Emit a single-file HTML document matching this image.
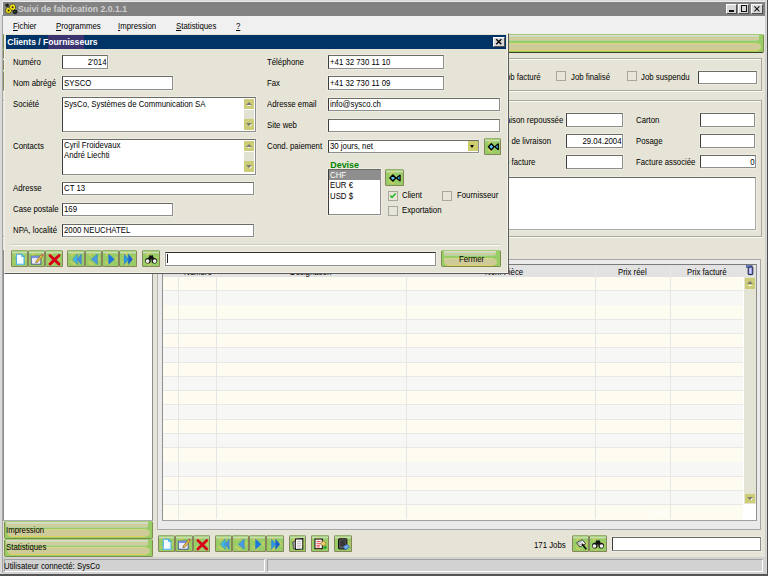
<!DOCTYPE html>
<html><head><meta charset="utf-8">
<style>
*{box-sizing:border-box}
html,body{margin:0;padding:0}
body{width:768px;height:576px;position:relative;overflow:hidden;background:#e6e4d6;font-family:"Liberation Sans",sans-serif;font-size:7.8px;color:#000}
.a{position:absolute}
.t{position:absolute;white-space:nowrap;line-height:8.95px;font-size:9.3px;transform:scaleX(.84);transform-origin:0 0}
.r{transform-origin:100% 0}
.c{transform-origin:50% 0}
.inp{position:absolute;background:#fff;border-top:1px solid #6c6c64;border-left:1px solid #3c3c3c;border-right:1px solid #8e8e8e;border-bottom:1px solid #8e8e8e;box-shadow:0 0 0 .6px #f2f2ea}
.inp2{position:absolute;background:#fff;border:1px solid #5a5a5a;border-right-color:#bdbbb0;border-bottom-color:#bdbbb0}
.chk{position:absolute;width:10px;height:10px;border:1px solid #a8a79c;background:#e8e6d8}
.pill{position:absolute;background:#98cc66;border:1px solid #7e8c4c;border-top-color:#a0cc78;border-radius:2px;overflow:hidden}
.pill:before{content:"";position:absolute;left:1.5px;right:4px;top:0;height:36%;background:linear-gradient(#e2dcc6 0,#e2dcc6 1.3px,#c4dcc0 1.3px,#c4dcc0 2.4px,#d0cc9c 2.4px,#d0cc9c 80%,#b0d4a0 80%);border-radius:0 0 5px 0/0 0 2px 0}
.pill:after{content:"";position:absolute;left:2px;right:2.5px;top:46%;height:38%;background:#cfcb98;border-top:1px solid #d8d488;border-bottom:1px solid #e0d062;border-radius:0 6px 6px 5px/0 50% 50% 70%}
.pill span{position:relative;z-index:1}
.gbtn{position:absolute;background:#9ccc6a;border:1px solid #7aa84e;border-radius:2px}
.sarr{position:absolute;width:10.5px;height:10.5px;background:#cdcd78}
.sarr:before,.sarr:after{content:"";position:absolute;left:50%;top:50%;width:0;height:0;border-left:3.2px solid transparent;border-right:3.2px solid transparent}
.up:after{margin:-2.2px 0 0 -3.2px;border-bottom:3.4px solid #7c7c74}
.up:before{margin:1.2px 0 0 -3.2px;border-top:1px solid #fff;border-left-width:3.2px}
.dn:after{margin:-1.6px 0 0 -3.2px;border-top:3.4px solid #7c7c74}
.dn:before{margin:-0.6px 0 0 -1px;border-top:3px solid #fff;border-left-width:3.4px;border-right:none;transform:skewX(-30deg)}
</style></head><body>

<!-- main window frame -->
<div class="a" style="left:0;top:0;width:768px;height:576px;background:#dadada"></div>
<div class="a" style="left:1.8px;top:1px;width:763.5px;height:572.5px;background:#ececec"></div>
<div class="a" style="left:2.2px;top:15px;width:0.9px;height:558px;background:#a4a4a4"></div>
<div class="a" style="left:765.3px;top:1px;width:1.2px;height:572.5px;background:#cdcdcd"></div>
<div class="a" style="left:766.5px;top:0;width:1.5px;height:576px;background:#4c4c4c"></div>
<div class="a" style="left:0;top:573.5px;width:768px;height:2.5px;background:#555"></div>
<!-- title bar -->
<div class="a" style="left:3px;top:2px;width:762px;height:13.5px;background:#828282"></div>
<svg class="a" style="left:4px;top:3px" width="14" height="12" viewBox="0 0 14 12">
<circle cx="11" cy="8.8" r="2.4" fill="#1a1a1a"/><circle cx="11" cy="8.8" r="0.8" fill="#2a6a2a"/>
<circle cx="3.2" cy="2.2" r="1.8" fill="#222"/>
<circle cx="4.6" cy="7.4" r="3" fill="#e8e010" stroke="#2a2a00" stroke-width="0.9" stroke-dasharray="1.2 0.7"/><circle cx="4.6" cy="7.4" r="1" fill="#402000"/>
<circle cx="8.6" cy="4.2" r="3" fill="#f0e818" stroke="#2a2a00" stroke-width="0.9" stroke-dasharray="1.2 0.7"/><circle cx="8.6" cy="4.2" r="1" fill="#401030"/>
</svg>
<div class="t" style="left:17.9px;top:4.3px;font-weight:bold;font-size:8.7px;color:#d0d0d0;line-height:11px;transform:none">Suivi de fabrication 2.0.1.1</div>
<!-- title buttons -->
<div class="a" style="left:726px;top:4px;width:11px;height:9.5px;background:#d8d8d8;border:1px solid;border-color:#fff #505050 #505050 #fff"></div>
<div class="a" style="left:729.2px;top:10.2px;width:4.6px;height:1.4px;background:#111"></div>
<div class="a" style="left:738px;top:4px;width:11px;height:9.5px;background:#d8d8d8;border:1px solid;border-color:#fff #505050 #505050 #fff"></div>
<div class="a" style="left:740.8px;top:5.4px;width:6.6px;height:6.3px;border:0.9px solid #111;border-top-width:1.8px"></div>
<div class="a" style="left:751px;top:4px;width:11.5px;height:9.5px;background:#d8d8d8;border:1px solid;border-color:#fff #505050 #505050 #fff"></div>
<svg class="a" style="left:751px;top:4px" width="12" height="10"><path d="M3.4 2.4 L8.4 7.4 M8.4 2.4 L3.4 7.4" stroke="#111" stroke-width="1.1"/></svg>
<!-- menu bar -->
<div class="a" style="left:3px;top:15.5px;width:762px;height:18.5px;background:#f0f0f0"></div>
<div class="t" style="left:12.7px;top:21.6px;"><u style="text-decoration:underline;text-decoration-thickness:1px;text-underline-offset:0.5px">F</u>ichier</div>
<div class="t" style="left:55.7px;top:21.6px;"><u style="text-decoration:underline;text-decoration-thickness:1px;text-underline-offset:0.5px">P</u>rogrammes</div>
<div class="t" style="left:118px;top:21.6px;"><u style="text-decoration:underline;text-decoration-thickness:1px;text-underline-offset:0.5px">I</u>mpression</div>
<div class="t" style="left:176px;top:21.6px;"><u style="text-decoration:underline;text-decoration-thickness:1px;text-underline-offset:0.5px">S</u>tatistiques</div>
<div class="t" style="left:236px;top:21.6px;"><u style="text-decoration:underline;text-decoration-thickness:1px;text-underline-offset:0.5px">?</u></div>

<!-- main content bg -->
<div class="a" style="left:3px;top:34px;width:762.3px;height:523px;background:#e6e4d6"></div>

<!-- green header bar -->
<div class="pill" style="left:3px;top:34px;width:761px;height:18.6px;border-bottom:1px solid #40401c;border-radius:0 2px 2px 0"></div>

<div class="a" style="left:3px;top:49.4px;width:1.2px;height:20.7px;background:#86865a;border-top:1.2px solid #90cc70"></div>
<div class="a" style="left:3px;top:71.3px;width:1.2px;height:20.1px;background:#86865a;border-top:1.2px solid #90cc70"></div>
<!-- group box 1 -->
<div class="a" style="left:3px;top:57.5px;width:759px;height:33px;border:1px solid #a9a89c;border-left:none;box-shadow:0 1px 0 #fafaf4,inset 0 1px 0 #fafaf4"></div>
<div class="t" style="left:501.5px;top:73.1px">Job facturé</div>
<div class="chk" style="left:556px;top:71px"></div>
<div class="t" style="left:570.7px;top:73.1px">Job finalisé</div>
<div class="chk" style="left:626.5px;top:71px"></div>
<div class="t" style="left:641px;top:73.1px">Job suspendu</div>
<div class="inp" style="left:698px;top:70.5px;width:58.5px;height:13.3px"></div>

<!-- group box 2 -->
<div class="a" style="left:3px;top:100.3px;width:759px;height:136.6px;border:1px solid #a9a89c;border-left:none;box-shadow:0 1px 0 #fafaf4,inset 0 1px 0 #fafaf4"></div>
<div class="t" style="left:506px;top:116.3px">aison repoussée</div>
<div class="inp" style="left:566.2px;top:113.3px;width:56.8px;height:13.4px"></div>
<div class="t" style="left:505.3px;top:137.3px">e de livraison</div>
<div class="inp" style="left:566.2px;top:134px;width:56.8px;height:13.5px"></div>
<div class="t r" style="left:560px;top:137.3px;width:61.5px;text-align:right">29.04.2004</div>
<div class="t" style="left:505.3px;top:158.3px">e facture</div>
<div class="inp" style="left:566.2px;top:155.2px;width:56.8px;height:13.5px"></div>
<div class="t" style="left:636px;top:116.3px">Carton</div>
<div class="inp" style="left:699.7px;top:113px;width:55.8px;height:13.7px"></div>
<div class="t" style="left:636px;top:137.3px">Posage</div>
<div class="inp" style="left:699.7px;top:134px;width:55.8px;height:13.5px"></div>
<div class="t" style="left:636px;top:158.3px">Facture associée</div>
<div class="inp" style="left:699.7px;top:155px;width:56.5px;height:13.3px"></div>
<div class="t r" style="left:700px;top:158.3px;width:54.5px;text-align:right">0</div>
<div class="inp" style="left:300px;top:176.7px;width:456px;height:53.2px;border-bottom-color:#a8a8a8;border-right-color:#a8a8a8"></div>

<!-- left panel -->
<div class="a" style="left:3px;top:250px;width:150.2px;height:270.8px;background:#fff;border-left:1.2px solid #8c8c8c;border-right:1px solid #8c8c8c;border-bottom:1px solid #b0b0b0"></div>
<div class="pill" style="left:3.5px;top:521.1px;width:149.5px;height:17.6px"></div>
<div class="t" style="left:6px;top:525.5px">Impression</div>
<div class="pill" style="left:3.5px;top:539.3px;width:149.5px;height:17.4px"></div>
<div class="t" style="left:6px;top:543px">Statistiques</div>

<!-- grid container -->
<div class="a" style="left:157.2px;top:259.2px;width:603.6px;height:270.8px;background:#eaeaea;border:1px solid #a8a8a8;border-left-color:#b4b4b4"></div>
<div class="a" style="left:162.3px;top:264.3px;width:594.8px;height:256.3px;background:#fff;border:1px solid #909090;border-top-color:#7a7a7a;border-bottom:1px solid #a0a0a0"></div>
<div class="a" style="left:163.0px;top:264.7px;width:580.2px;height:12.199999999999989px;background:#e2e2e2"></div>
<div class="a" style="left:163.0px;top:276.90px;width:580.2px;height:14.38px;background:#fefcf0;border-bottom:1px solid #e8e8e6"></div>
<div class="a" style="left:163.0px;top:291.18px;width:580.2px;height:14.38px;background:#f7f7f6;border-bottom:1px solid #e8e8e6"></div>
<div class="a" style="left:163.0px;top:305.45px;width:580.2px;height:14.38px;background:#fefcf0;border-bottom:1px solid #e8e8e6"></div>
<div class="a" style="left:163.0px;top:319.73px;width:580.2px;height:14.38px;background:#f7f7f6;border-bottom:1px solid #e8e8e6"></div>
<div class="a" style="left:163.0px;top:334.01px;width:580.2px;height:14.38px;background:#fefcf0;border-bottom:1px solid #e8e8e6"></div>
<div class="a" style="left:163.0px;top:348.28px;width:580.2px;height:14.38px;background:#f7f7f6;border-bottom:1px solid #e8e8e6"></div>
<div class="a" style="left:163.0px;top:362.56px;width:580.2px;height:14.38px;background:#fefcf0;border-bottom:1px solid #e8e8e6"></div>
<div class="a" style="left:163.0px;top:376.84px;width:580.2px;height:14.38px;background:#f7f7f6;border-bottom:1px solid #e8e8e6"></div>
<div class="a" style="left:163.0px;top:391.11px;width:580.2px;height:14.38px;background:#fefcf0;border-bottom:1px solid #e8e8e6"></div>
<div class="a" style="left:163.0px;top:405.39px;width:580.2px;height:14.38px;background:#f7f7f6;border-bottom:1px solid #e8e8e6"></div>
<div class="a" style="left:163.0px;top:419.66px;width:580.2px;height:14.38px;background:#fefcf0;border-bottom:1px solid #e8e8e6"></div>
<div class="a" style="left:163.0px;top:433.94px;width:580.2px;height:14.38px;background:#f7f7f6;border-bottom:1px solid #e8e8e6"></div>
<div class="a" style="left:163.0px;top:448.22px;width:580.2px;height:14.38px;background:#fefcf0;border-bottom:1px solid #e8e8e6"></div>
<div class="a" style="left:163.0px;top:462.49px;width:580.2px;height:14.38px;background:#f7f7f6;border-bottom:1px solid #e8e8e6"></div>
<div class="a" style="left:163.0px;top:476.77px;width:580.2px;height:14.38px;background:#fefcf0;border-bottom:1px solid #e8e8e6"></div>
<div class="a" style="left:163.0px;top:491.05px;width:580.2px;height:14.38px;background:#f7f7f6;border-bottom:1px solid #e8e8e6"></div>
<div class="a" style="left:163.0px;top:505.32px;width:580.2px;height:14.28px;background:#fefcf0;border-bottom:none"></div>
<div class="a" style="left:178.4px;top:264.7px;width:1px;height:254.8px;background:#e6e6e4"></div>
<div class="a" style="left:216.0px;top:264.7px;width:1px;height:254.8px;background:#e6e6e4"></div>
<div class="a" style="left:405.6px;top:264.7px;width:1px;height:254.8px;background:#e6e6e4"></div>
<div class="a" style="left:595.3px;top:264.7px;width:1px;height:254.8px;background:#e6e6e4"></div>
<div class="a" style="left:669.5px;top:264.7px;width:1px;height:254.8px;background:#e6e6e4"></div>
<div class="t" style="left:184px;top:267.5px">Numéro</div>
<div class="t" style="left:290px;top:267.5px">Désignation</div>
<div class="t" style="left:484.5px;top:267.5px">Nom Pièce</div>
<div class="t r" style="left:620px;top:508.5px;width:48px;text-align:right;color:#fff">0.00</div>
<div class="t" style="left:618px;top:267.5px">Prix réel</div>
<div class="t" style="left:686.5px;top:267.5px">Prix facturé</div>
<div class="a" style="left:743.2px;top:264.7px;width:13.3px;height:254.8px;background:#fff"></div>
<div class="a" style="left:743.2px;top:264.7px;width:13.3px;height:12.2px;background:#e2e2e2"></div>
<div class="a" style="left:743.9px;top:276.9px;width:12.1px;height:227px;background:#e4e4d4"></div>
<svg class="a" style="left:745px;top:265px" width="10" height="12"><rect x="1.3" y="0.7" width="5.8" height="1.7" fill="#6a8ae8" stroke="#203070" stroke-width="0.5"/><rect x="3.2" y="2" width="4.6" height="7.6" rx="0.6" fill="#a0a0f0" stroke="#141830" stroke-width="1"/><rect x="4.6" y="3.2" width="1.4" height="5" fill="#d0d8ff"/></svg>
<div class="sarr up" style="left:744.9px;top:278px;width:10.2px;height:10.8px"></div>
<div class="sarr dn" style="left:744.6px;top:494px;width:10.4px;height:9.4px"></div>

<!-- bottom toolbar -->
<div class="a" style="left:157.9px;top:535.1px;width:17.4px;height:17.4px;background:linear-gradient(#a4d480 0,#a4d480 1px,#d4dcb8 1px,#c8dcb8 2.2px,#b0d490 2.2px,#98cc66 3.2px,#98cc66 100%);border:1px solid #86865a;border-top-color:#98b070;border-radius:1.5px"></div><svg class="a" style="left:157.9px;top:535.1px" width="17.4" height="17.4" viewBox="0 0 18 18"><path d="M4 6 A6 6 0 0 1 9 3.2 M14.5 7 A6 6 0 0 1 14.6 11 M9 14.8 A6 6 0 0 1 3.6 11.5" fill="none" stroke="#dcd060" stroke-width="1.6" opacity=".75"/><path d="M5.4 4.3 H11 L13.4 6.7 V15 H5.4 Z" fill="#f6fcff" stroke="#28a4e8" stroke-width="1"/><path d="M11 4.3 V6.7 H13.4" fill="#7cc8f0" stroke="#28a4e8" stroke-width="0.8"/><path d="M6 14.4 H12.8 V8" fill="none" stroke="#9cd8f4" stroke-width="1.1"/></svg>
<div class="a" style="left:175.3px;top:535.1px;width:17.4px;height:17.4px;background:linear-gradient(#a4d480 0,#a4d480 1px,#d4dcb8 1px,#c8dcb8 2.2px,#b0d490 2.2px,#98cc66 3.2px,#98cc66 100%);border:1px solid #86865a;border-top-color:#98b070;border-radius:1.5px"></div><svg class="a" style="left:175.3px;top:535.1px" width="17.4" height="17.4" viewBox="0 0 18 18"><path d="M4 6 A6 6 0 0 1 9 3.2 M14.5 7 A6 6 0 0 1 14.6 11 M9 14.8 A6 6 0 0 1 3.6 11.5" fill="none" stroke="#dcd060" stroke-width="1.6" opacity=".75"/><rect x="3.4" y="6.3" width="10.2" height="8.4" fill="#ececf6" stroke="#3a4a8a" stroke-width="0.9"/><rect x="3.4" y="6.3" width="10.2" height="2" fill="#7890e8"/><path d="M8.6 11.2 L14.2 4.6 L15.8 6 L10.2 12.6 L8.2 13.2 Z" fill="#f0c048" stroke="#705020" stroke-width="0.6"/><path d="M14.2 4.6 L15 3.8 L16.6 5.2 L15.8 6 Z" fill="#e04060"/></svg>
<div class="a" style="left:192.7px;top:535.1px;width:16.9px;height:17.4px;background:linear-gradient(#a4d480 0,#a4d480 1px,#d4dcb8 1px,#c8dcb8 2.2px,#b0d490 2.2px,#98cc66 3.2px,#98cc66 100%);border:1px solid #86865a;border-top-color:#98b070;border-radius:1.5px"></div><svg class="a" style="left:192.7px;top:535.1px" width="16.9" height="17.4" viewBox="0 0 18 18"><path d="M4 6 A6 6 0 0 1 9 3.2 M14.5 7 A6 6 0 0 1 14.6 11 M9 14.8 A6 6 0 0 1 3.6 11.5" fill="none" stroke="#dcd060" stroke-width="1.6" opacity=".75"/><path d="M5.2 5.6 L14.6 14.6 M14.6 5.6 L5.2 14.6" stroke="#d8001a" stroke-width="2.9" stroke-linecap="round"/></svg>
<div class="a" style="left:214.7px;top:535.1px;width:17.3px;height:17.4px;background:linear-gradient(#a4d480 0,#a4d480 1px,#d4dcb8 1px,#c8dcb8 2.2px,#b0d490 2.2px,#98cc66 3.2px,#98cc66 100%);border:1px solid #86865a;border-top-color:#98b070;border-radius:1.5px"></div><svg class="a" style="left:214.7px;top:535.1px" width="17.3" height="17.4" viewBox="0 0 18 18"><path d="M4 6 A6 6 0 0 1 9 3.2 M14.5 7 A6 6 0 0 1 14.6 11 M9 14.8 A6 6 0 0 1 3.6 11.5" fill="none" stroke="#dcd060" stroke-width="1.6" opacity=".75"/><path d="M10.6 4.2 L6 9.6 L10.6 15 Z" fill="#40b8e8" stroke="#2a70c0" stroke-width="0.4"/><path d="M14.8 4.2 L10.2 9.6 L14.8 15 Z" fill="#4890e0" stroke="#2a70c0" stroke-width="0.4"/></svg>
<div class="a" style="left:232.0px;top:535.1px;width:17.0px;height:17.4px;background:linear-gradient(#a4d480 0,#a4d480 1px,#d4dcb8 1px,#c8dcb8 2.2px,#b0d490 2.2px,#98cc66 3.2px,#98cc66 100%);border:1px solid #86865a;border-top-color:#98b070;border-radius:1.5px"></div><svg class="a" style="left:232.0px;top:535.1px" width="17.0" height="17.4" viewBox="0 0 18 18"><path d="M4 6 A6 6 0 0 1 9 3.2 M14.5 7 A6 6 0 0 1 14.6 11 M9 14.8 A6 6 0 0 1 3.6 11.5" fill="none" stroke="#dcd060" stroke-width="1.6" opacity=".75"/><path d="M12.9 4.1 L6.7 9.6 L12.9 15 Z" fill="#4a9ae0" stroke="#2a70c0" stroke-width="0.4"/></svg>
<div class="a" style="left:249.0px;top:535.1px;width:17.0px;height:17.4px;background:linear-gradient(#a4d480 0,#a4d480 1px,#d4dcb8 1px,#c8dcb8 2.2px,#b0d490 2.2px,#98cc66 3.2px,#98cc66 100%);border:1px solid #86865a;border-top-color:#98b070;border-radius:1.5px"></div><svg class="a" style="left:249.0px;top:535.1px" width="17.0" height="17.4" viewBox="0 0 18 18"><path d="M4 6 A6 6 0 0 1 9 3.2 M14.5 7 A6 6 0 0 1 14.6 11 M9 14.8 A6 6 0 0 1 3.6 11.5" fill="none" stroke="#dcd060" stroke-width="1.6" opacity=".75"/><path d="M6.9 4.1 L12.9 9.6 L6.9 15 Z" fill="#1e78e0" stroke="#2a70c0" stroke-width="0.4"/></svg>
<div class="a" style="left:266.0px;top:535.1px;width:17.9px;height:17.4px;background:linear-gradient(#a4d480 0,#a4d480 1px,#d4dcb8 1px,#c8dcb8 2.2px,#b0d490 2.2px,#98cc66 3.2px,#98cc66 100%);border:1px solid #86865a;border-top-color:#98b070;border-radius:1.5px"></div><svg class="a" style="left:266.0px;top:535.1px" width="17.9" height="17.4" viewBox="0 0 18 18"><path d="M4 6 A6 6 0 0 1 9 3.2 M14.5 7 A6 6 0 0 1 14.6 11 M9 14.8 A6 6 0 0 1 3.6 11.5" fill="none" stroke="#dcd060" stroke-width="1.6" opacity=".75"/><path d="M5.3 4.2 L9.8 9.6 L5.3 15 Z" fill="#2a98e8" stroke="#2a70c0" stroke-width="0.4"/><path d="M9.6 4.2 L14.2 9.6 L9.6 15 Z" fill="#1a60d0" stroke="#2a70c0" stroke-width="0.4"/></svg>
<div class="a" style="left:288.9px;top:535.1px;width:17.6px;height:17.4px;background:linear-gradient(#a4d480 0,#a4d480 1px,#d4dcb8 1px,#c8dcb8 2.2px,#b0d490 2.2px,#98cc66 3.2px,#98cc66 100%);border:1px solid #86865a;border-top-color:#98b070;border-radius:1.5px"></div><svg class="a" style="left:288.9px;top:535.1px" width="17.6" height="17.4" viewBox="0 0 18 18"><path d="M4 6 A6 6 0 0 1 9 3.2 M14.5 7 A6 6 0 0 1 14.6 11 M9 14.8 A6 6 0 0 1 3.6 11.5" fill="none" stroke="#dcd060" stroke-width="1.6" opacity=".75"/><path d="M6.6 4.2 L14.2 3.8 V14.6 L6.6 15 Z" fill="#fafafa" stroke="#111" stroke-width="1.1"/><path d="M3.6 7.2 L6.6 6 V13.6 L4.6 14.6 Z" fill="#9a9a9a" stroke="#222" stroke-width="0.6"/><path d="M8.4 6.6 H12.6 M8.4 8.6 H12.6 M8.4 10.6 H12.6 M8.4 12.4 H12" stroke="#a0a0a0" stroke-width="0.7"/></svg>
<div class="a" style="left:311.2px;top:535.1px;width:17.6px;height:17.4px;background:linear-gradient(#a4d480 0,#a4d480 1px,#d4dcb8 1px,#c8dcb8 2.2px,#b0d490 2.2px,#98cc66 3.2px,#98cc66 100%);border:1px solid #86865a;border-top-color:#98b070;border-radius:1.5px"></div><svg class="a" style="left:311.2px;top:535.1px" width="17.6" height="17.4" viewBox="0 0 18 18"><path d="M4 6 A6 6 0 0 1 9 3.2 M14.5 7 A6 6 0 0 1 14.6 11 M9 14.8 A6 6 0 0 1 3.6 11.5" fill="none" stroke="#dcd060" stroke-width="1.6" opacity=".75"/><rect x="4" y="4.2" width="7.6" height="10" fill="#fff" stroke="#111" stroke-width="1.1"/><path d="M5.6 6.6 H10 M5.6 8.6 H10 M5.6 10.6 H9.4 M5.6 12.4 H9" stroke="#e02828" stroke-width="0.9"/><path d="M9.6 9.4 L12.6 6 L15.6 8.2 L13.2 11.6 Z" fill="#f0d070" stroke="#806020" stroke-width="0.6"/><path d="M12 13.4 L15.8 10.6 L15.8 14.4 Z" fill="#10a020"/></svg>
<div class="a" style="left:334.1px;top:535.1px;width:17.6px;height:17.4px;background:linear-gradient(#a4d480 0,#a4d480 1px,#d4dcb8 1px,#c8dcb8 2.2px,#b0d490 2.2px,#98cc66 3.2px,#98cc66 100%);border:1px solid #86865a;border-top-color:#98b070;border-radius:1.5px"></div><svg class="a" style="left:334.1px;top:535.1px" width="17.6" height="17.4" viewBox="0 0 18 18"><path d="M4 6 A6 6 0 0 1 9 3.2 M14.5 7 A6 6 0 0 1 14.6 11 M9 14.8 A6 6 0 0 1 3.6 11.5" fill="none" stroke="#dcd060" stroke-width="1.6" opacity=".75"/><rect x="4.6" y="3.8" width="8.6" height="10.6" rx="1.2" fill="#5a5a5a" stroke="#111" stroke-width="1.1"/><rect x="6.2" y="5.4" width="5.4" height="6.2" fill="#383838"/><path d="M9.4 12 L13.8 9.6 L15.8 12.8 L11.4 15.2 Z" fill="#70b0f0" stroke="#2050a0" stroke-width="0.7"/></svg>
<div class="a" style="left:571.5px;top:535.1px;width:17.6px;height:17.4px;background:linear-gradient(#a4d480 0,#a4d480 1px,#d4dcb8 1px,#c8dcb8 2.2px,#b0d490 2.2px,#98cc66 3.2px,#98cc66 100%);border:1px solid #86865a;border-top-color:#98b070;border-radius:1.5px"></div><svg class="a" style="left:571.5px;top:535.1px" width="17.6" height="17.4" viewBox="0 0 18 18"><path d="M4 6 A6 6 0 0 1 9 3.2 M14.5 7 A6 6 0 0 1 14.6 11 M9 14.8 A6 6 0 0 1 3.6 11.5" fill="none" stroke="#dcd060" stroke-width="1.6" opacity=".75"/><path d="M4.6 8 L10.6 5 L14 9.2 L8 12.4 Z" fill="#f8f8f8" stroke="#333" stroke-width="0.9"/><path d="M6 9 L10 7 M7 10.6 L11 8.6" stroke="#777" stroke-width="0.7"/><path d="M10.4 9.4 L14.6 14.8" stroke="#111" stroke-width="1.8"/></svg>
<div class="a" style="left:589.1px;top:535.1px;width:17.5px;height:17.4px;background:linear-gradient(#a4d480 0,#a4d480 1px,#d4dcb8 1px,#c8dcb8 2.2px,#b0d490 2.2px,#98cc66 3.2px,#98cc66 100%);border:1px solid #86865a;border-top-color:#98b070;border-radius:1.5px"></div><svg class="a" style="left:589.1px;top:535.1px" width="17.5" height="17.4" viewBox="0 0 18 18"><path d="M4 6 A6 6 0 0 1 9 3.2 M14.5 7 A6 6 0 0 1 14.6 11 M9 14.8 A6 6 0 0 1 3.6 11.5" fill="none" stroke="#dcd060" stroke-width="1.6" opacity=".75"/><path d="M5.5 10 L8 5 L9.2 6.2 L10.4 5 L13 10 L10.6 11.5 L9.2 9 L7.8 11.5 Z" fill="#111"/><circle cx="6" cy="11" r="2.9" fill="#181818"/><circle cx="12.6" cy="11" r="2.9" fill="#181818"/><circle cx="5.6" cy="11.4" r="1.9" fill="#f0f0f0"/><circle cx="12.9" cy="11.4" r="1.9" fill="#f0f0f0"/></svg>
<div class="t" style="left:533.6px;top:540.5px">171 Jobs</div>
<div class="inp" style="left:612px;top:537px;width:148.8px;height:14px"></div>

<!-- status bar -->
<div class="a" style="left:3px;top:557px;width:762px;height:16.5px;background:#d2d2d2"></div>
<div class="a" style="left:4px;top:558.5px;width:261px;height:13.5px;border:1px solid;border-color:#a0a0a0 #fff #fff #a0a0a0"></div>
<div class="a" style="left:267px;top:558.5px;width:496px;height:13.5px;border:1px solid;border-color:#a0a0a0 #fff #fff #a0a0a0"></div>
<div class="t" style="left:4.2px;top:562px">Utilisateur connecté: SysCo</div>

<!-- DIALOG -->
<div id="dlg" class="a" style="left:4px;top:33px;width:504.5px;height:241px;background:#e6e4d6;border:1px solid;border-color:#f0f0e8 #5a5a5a #5a5a5a #f0f0e8;border-right-width:1.6px;border-bottom-width:1.6px;box-shadow:inset -1px -1px 0 #f4f2e8"></div>
<div class="a" style="left:6px;top:35px;width:500px;height:13.6px;background:#003366"></div>
<div class="a" style="left:48.3px;top:35px;width:35.5px;height:13.6px;background:#3a3370"></div>
<div class="t" style="left:7.3px;top:37px;font-weight:bold;font-size:8.6px;color:#fff;line-height:11px;transform:none">Clients / Fournisseurs</div>
<div class="a" style="left:493px;top:37px;width:11.5px;height:9.8px;background:#d8d8d8;border:1px solid;border-color:#fff #505050 #505050 #fff"></div>
<svg class="a" style="left:493px;top:37px" width="12" height="10"><path d="M3.3 2.3 L8.3 7.3 M8.3 2.3 L3.3 7.3" stroke="#000" stroke-width="1.4"/></svg>

<div class="t" style="left:12.5px;top:57.5px">Numéro</div>
<div class="inp" style="left:62.2px;top:55.2px;width:46px;height:13.5px"></div>
<div class="t r" style="left:50px;top:57.5px;width:56.5px;text-align:right">2'014</div>
<div class="t" style="left:12.5px;top:78.5px">Nom abrégé</div>
<div class="inp" style="left:62.2px;top:76px;width:111px;height:14px"></div>
<div class="t" style="left:64px;top:78.5px">SYSCO</div>
<div class="t" style="left:12.5px;top:99.5px">Société</div>
<div class="inp" style="left:62.2px;top:97px;width:194px;height:35px"></div>
<div class="t" style="left:64px;top:99.5px">SysCo, Systèmes de Communication SA</div>
<div class="sarr up" style="left:243.6px;top:98.8px;width:10.8px;height:10.4px"></div>
<div class="a" style="left:243.6px;top:109.6px;width:10.8px;height:9.4px;background:#e2e2d2"></div>
<div class="sarr dn" style="left:243.6px;top:119.4px;width:10.8px;height:11px"></div>
<div class="t" style="left:12.5px;top:141.5px">Contacts</div>
<div class="inp" style="left:62.2px;top:139px;width:194px;height:36px"></div>
<div class="t" style="left:64px;top:140.5px">Cyril Froidevaux</div>
<div class="t" style="left:64px;top:150.5px">André Liechti</div>
<div class="sarr up" style="left:243.6px;top:140.8px;width:10.8px;height:10.4px"></div>
<div class="a" style="left:243.6px;top:151.6px;width:10.8px;height:9.4px;background:#e2e2d2"></div>
<div class="sarr dn" style="left:243.6px;top:161.4px;width:10.8px;height:11px"></div>
<div class="t" style="left:12.5px;top:183.5px">Adresse</div>
<div class="inp" style="left:62.2px;top:181.5px;width:192px;height:13.5px"></div>
<div class="t" style="left:64px;top:183.5px">CT 13</div>
<div class="t" style="left:12.5px;top:204.5px">Case postale</div>
<div class="inp" style="left:62.2px;top:203px;width:111px;height:13px"></div>
<div class="t" style="left:64px;top:204.5px">169</div>
<div class="t" style="left:12.5px;top:225.5px">NPA, localité</div>
<div class="inp" style="left:62.2px;top:223.5px;width:192px;height:13.3px"></div>
<div class="t" style="left:64px;top:225.5px">2000 NEUCHATEL</div>

<div class="t" style="left:266.5px;top:57.5px">Téléphone</div>
<div class="inp" style="left:328px;top:55px;width:115.5px;height:14px"></div>
<div class="t" style="left:330px;top:57.5px">+41 32 730 11 10</div>
<div class="t" style="left:266.5px;top:78.5px">Fax</div>
<div class="inp" style="left:328px;top:76px;width:115.5px;height:14px"></div>
<div class="t" style="left:330px;top:78.5px">+41 32 730 11 09</div>
<div class="t" style="left:266.5px;top:99.5px">Adresse email</div>
<div class="inp" style="left:328px;top:97.5px;width:172px;height:13.5px"></div>
<div class="t" style="left:330px;top:99.5px">info@sysco.ch</div>
<div class="t" style="left:266.5px;top:120.5px">Site web</div>
<div class="inp" style="left:328px;top:119px;width:172px;height:13.3px"></div>
<div class="t" style="left:266.5px;top:141.5px">Cond. paiement</div>
<div class="inp" style="left:328px;top:139.5px;width:150.5px;height:13px"></div>
<div class="t" style="left:330px;top:141.5px">30 jours, net</div>
<div class="a" style="left:468.1px;top:140.9px;width:9.9px;height:10.5px;background:#cece6c"></div><div class="a" style="left:470.3px;top:144.6px;width:0;height:0;border-left:2.8px solid transparent;border-right:2.8px solid transparent;border-top:3px solid #000"></div>

<div class="t" style="left:330.3px;top:160.5px;font-weight:bold;font-size:8.9px;color:#008400;transform:none">Devise</div>
<div class="inp" style="left:328.2px;top:168.7px;width:52.6px;height:46px"></div>
<div class="a" style="left:329.2px;top:169.7px;width:50.6px;height:10.5px;background:#8e8e8e"></div>
<div class="t" style="left:330px;top:171px;color:#fff">CHF</div>
<div class="t" style="left:330px;top:180.5px">EUR €</div>
<div class="t" style="left:330px;top:191.5px">USD $</div>
<div class="chk" style="left:387.6px;top:191px"></div>
<svg class="a" style="left:387.6px;top:191px" width="10" height="10"><path d="M2.3 4.6 L4 6.5 L7.6 2.6" stroke="#21b021" stroke-width="1.5" fill="none"/></svg>
<div class="t" style="left:402.4px;top:191px">Client</div>
<div class="chk" style="left:442.3px;top:191px"></div>
<div class="t" style="left:456.6px;top:191px">Fournisseur</div>
<div class="chk" style="left:387.6px;top:206px"></div>
<div class="t" style="left:402.4px;top:206px">Exportation</div>

<div class="a" style="left:10px;top:243.5px;width:491px;height:1px;background:#cfcdbf;border-bottom:1px solid #fafaf4;height:2px"></div>
<div class="a" style="left:484.0px;top:138.2px;width:17.3px;height:17.1px;background:linear-gradient(#a4d480 0,#a4d480 1px,#d4dcb8 1px,#c8dcb8 2.2px,#b0d490 2.2px,#98cc66 3.2px,#98cc66 100%);border:1px solid #86865a;border-top-color:#98b070;border-radius:1.5px"></div><svg class="a" style="left:484.0px;top:138.2px" width="17.3" height="17.1" viewBox="0 0 18 18"><path d="M4 6 A6 6 0 0 1 9 3.2 M14.5 7 A6 6 0 0 1 14.6 11 M9 14.8 A6 6 0 0 1 3.6 11.5" fill="none" stroke="#dcd060" stroke-width="1.6" opacity=".75"/><path d="M7.6 6.1 L10.6 9.2 L7.6 12.3 L4.6 9.2 Z" fill="#58ccf8" stroke="#000" stroke-width="1.4" stroke-linejoin="round"/><path d="M10.4 9.2 L14.2 5.8 H15.6 V12.6 H14.2 Z" fill="#000"/><path d="M12.2 9.2 L14.4 7.3 V11.1 Z" fill="#38b0ec"/></svg>
<div class="a" style="left:385.2px;top:168.7px;width:18.5px;height:17.6px;background:linear-gradient(#a4d480 0,#a4d480 1px,#d4dcb8 1px,#c8dcb8 2.2px,#b0d490 2.2px,#98cc66 3.2px,#98cc66 100%);border:1px solid #86865a;border-top-color:#98b070;border-radius:1.5px"></div><svg class="a" style="left:385.2px;top:168.7px" width="18.5" height="17.6" viewBox="0 0 18 18"><path d="M4 6 A6 6 0 0 1 9 3.2 M14.5 7 A6 6 0 0 1 14.6 11 M9 14.8 A6 6 0 0 1 3.6 11.5" fill="none" stroke="#dcd060" stroke-width="1.6" opacity=".75"/><path d="M7.6 6.1 L10.6 9.2 L7.6 12.3 L4.6 9.2 Z" fill="#58ccf8" stroke="#000" stroke-width="1.4" stroke-linejoin="round"/><path d="M10.4 9.2 L14.2 5.8 H15.6 V12.6 H14.2 Z" fill="#000"/><path d="M12.2 9.2 L14.4 7.3 V11.1 Z" fill="#38b0ec"/></svg>
<div class="a" style="left:10.5px;top:249.8px;width:17.7px;height:17.5px;background:linear-gradient(#a4d480 0,#a4d480 1px,#d4dcb8 1px,#c8dcb8 2.2px,#b0d490 2.2px,#98cc66 3.2px,#98cc66 100%);border:1px solid #86865a;border-top-color:#98b070;border-radius:1.5px"></div><svg class="a" style="left:10.5px;top:249.8px" width="17.7" height="17.5" viewBox="0 0 18 18"><path d="M4 6 A6 6 0 0 1 9 3.2 M14.5 7 A6 6 0 0 1 14.6 11 M9 14.8 A6 6 0 0 1 3.6 11.5" fill="none" stroke="#dcd060" stroke-width="1.6" opacity=".75"/><path d="M5.4 4.3 H11 L13.4 6.7 V15 H5.4 Z" fill="#f6fcff" stroke="#28a4e8" stroke-width="1"/><path d="M11 4.3 V6.7 H13.4" fill="#7cc8f0" stroke="#28a4e8" stroke-width="0.8"/><path d="M6 14.4 H12.8 V8" fill="none" stroke="#9cd8f4" stroke-width="1.1"/></svg>
<div class="a" style="left:28.2px;top:249.8px;width:17.1px;height:17.5px;background:linear-gradient(#a4d480 0,#a4d480 1px,#d4dcb8 1px,#c8dcb8 2.2px,#b0d490 2.2px,#98cc66 3.2px,#98cc66 100%);border:1px solid #86865a;border-top-color:#98b070;border-radius:1.5px"></div><svg class="a" style="left:28.2px;top:249.8px" width="17.1" height="17.5" viewBox="0 0 18 18"><path d="M4 6 A6 6 0 0 1 9 3.2 M14.5 7 A6 6 0 0 1 14.6 11 M9 14.8 A6 6 0 0 1 3.6 11.5" fill="none" stroke="#dcd060" stroke-width="1.6" opacity=".75"/><rect x="3.4" y="6.3" width="10.2" height="8.4" fill="#ececf6" stroke="#3a4a8a" stroke-width="0.9"/><rect x="3.4" y="6.3" width="10.2" height="2" fill="#7890e8"/><path d="M8.6 11.2 L14.2 4.6 L15.8 6 L10.2 12.6 L8.2 13.2 Z" fill="#f0c048" stroke="#705020" stroke-width="0.6"/><path d="M14.2 4.6 L15 3.8 L16.6 5.2 L15.8 6 Z" fill="#e04060"/></svg>
<div class="a" style="left:45.3px;top:249.8px;width:17.3px;height:17.5px;background:linear-gradient(#a4d480 0,#a4d480 1px,#d4dcb8 1px,#c8dcb8 2.2px,#b0d490 2.2px,#98cc66 3.2px,#98cc66 100%);border:1px solid #86865a;border-top-color:#98b070;border-radius:1.5px"></div><svg class="a" style="left:45.3px;top:249.8px" width="17.3" height="17.5" viewBox="0 0 18 18"><path d="M4 6 A6 6 0 0 1 9 3.2 M14.5 7 A6 6 0 0 1 14.6 11 M9 14.8 A6 6 0 0 1 3.6 11.5" fill="none" stroke="#dcd060" stroke-width="1.6" opacity=".75"/><path d="M5.2 5.6 L14.6 14.6 M14.6 5.6 L5.2 14.6" stroke="#d8001a" stroke-width="2.9" stroke-linecap="round"/></svg>
<div class="a" style="left:67.3px;top:249.8px;width:17.5px;height:17.5px;background:linear-gradient(#a4d480 0,#a4d480 1px,#d4dcb8 1px,#c8dcb8 2.2px,#b0d490 2.2px,#98cc66 3.2px,#98cc66 100%);border:1px solid #86865a;border-top-color:#98b070;border-radius:1.5px"></div><svg class="a" style="left:67.3px;top:249.8px" width="17.5" height="17.5" viewBox="0 0 18 18"><path d="M4 6 A6 6 0 0 1 9 3.2 M14.5 7 A6 6 0 0 1 14.6 11 M9 14.8 A6 6 0 0 1 3.6 11.5" fill="none" stroke="#dcd060" stroke-width="1.6" opacity=".75"/><path d="M10.6 4.2 L6 9.6 L10.6 15 Z" fill="#40b8e8" stroke="#2a70c0" stroke-width="0.4"/><path d="M14.8 4.2 L10.2 9.6 L14.8 15 Z" fill="#4890e0" stroke="#2a70c0" stroke-width="0.4"/></svg>
<div class="a" style="left:84.8px;top:249.8px;width:17.2px;height:17.5px;background:linear-gradient(#a4d480 0,#a4d480 1px,#d4dcb8 1px,#c8dcb8 2.2px,#b0d490 2.2px,#98cc66 3.2px,#98cc66 100%);border:1px solid #86865a;border-top-color:#98b070;border-radius:1.5px"></div><svg class="a" style="left:84.8px;top:249.8px" width="17.2" height="17.5" viewBox="0 0 18 18"><path d="M4 6 A6 6 0 0 1 9 3.2 M14.5 7 A6 6 0 0 1 14.6 11 M9 14.8 A6 6 0 0 1 3.6 11.5" fill="none" stroke="#dcd060" stroke-width="1.6" opacity=".75"/><path d="M12.9 4.1 L6.7 9.6 L12.9 15 Z" fill="#4a9ae0" stroke="#2a70c0" stroke-width="0.4"/></svg>
<div class="a" style="left:102.0px;top:249.8px;width:17.3px;height:17.5px;background:linear-gradient(#a4d480 0,#a4d480 1px,#d4dcb8 1px,#c8dcb8 2.2px,#b0d490 2.2px,#98cc66 3.2px,#98cc66 100%);border:1px solid #86865a;border-top-color:#98b070;border-radius:1.5px"></div><svg class="a" style="left:102.0px;top:249.8px" width="17.3" height="17.5" viewBox="0 0 18 18"><path d="M4 6 A6 6 0 0 1 9 3.2 M14.5 7 A6 6 0 0 1 14.6 11 M9 14.8 A6 6 0 0 1 3.6 11.5" fill="none" stroke="#dcd060" stroke-width="1.6" opacity=".75"/><path d="M6.9 4.1 L12.9 9.6 L6.9 15 Z" fill="#1e78e0" stroke="#2a70c0" stroke-width="0.4"/></svg>
<div class="a" style="left:119.3px;top:249.8px;width:17.4px;height:17.5px;background:linear-gradient(#a4d480 0,#a4d480 1px,#d4dcb8 1px,#c8dcb8 2.2px,#b0d490 2.2px,#98cc66 3.2px,#98cc66 100%);border:1px solid #86865a;border-top-color:#98b070;border-radius:1.5px"></div><svg class="a" style="left:119.3px;top:249.8px" width="17.4" height="17.5" viewBox="0 0 18 18"><path d="M4 6 A6 6 0 0 1 9 3.2 M14.5 7 A6 6 0 0 1 14.6 11 M9 14.8 A6 6 0 0 1 3.6 11.5" fill="none" stroke="#dcd060" stroke-width="1.6" opacity=".75"/><path d="M5.3 4.2 L9.8 9.6 L5.3 15 Z" fill="#2a98e8" stroke="#2a70c0" stroke-width="0.4"/><path d="M9.6 4.2 L14.2 9.6 L9.6 15 Z" fill="#1a60d0" stroke="#2a70c0" stroke-width="0.4"/></svg>
<div class="a" style="left:141.9px;top:249.8px;width:17.8px;height:17.5px;background:linear-gradient(#a4d480 0,#a4d480 1px,#d4dcb8 1px,#c8dcb8 2.2px,#b0d490 2.2px,#98cc66 3.2px,#98cc66 100%);border:1px solid #86865a;border-top-color:#98b070;border-radius:1.5px"></div><svg class="a" style="left:141.9px;top:249.8px" width="17.8" height="17.5" viewBox="0 0 18 18"><path d="M4 6 A6 6 0 0 1 9 3.2 M14.5 7 A6 6 0 0 1 14.6 11 M9 14.8 A6 6 0 0 1 3.6 11.5" fill="none" stroke="#dcd060" stroke-width="1.6" opacity=".75"/><path d="M5.5 10 L8 5 L9.2 6.2 L10.4 5 L13 10 L10.6 11.5 L9.2 9 L7.8 11.5 Z" fill="#111"/><circle cx="6" cy="11" r="2.9" fill="#181818"/><circle cx="12.6" cy="11" r="2.9" fill="#181818"/><circle cx="5.6" cy="11.4" r="1.9" fill="#f0f0f0"/><circle cx="12.9" cy="11.4" r="1.9" fill="#f0f0f0"/></svg>
<div class="inp" style="left:165.3px;top:252px;width:270.7px;height:13.5px;border-left-color:#9a9a96;border-top-color:#303030"></div>
<div class="a" style="left:167px;top:254.1px;width:1px;height:8.6px;background:#222"></div>
<div class="pill" style="left:441.3px;top:249.9px;width:59.4px;height:17.3px"></div>
<div class="t c" style="left:441.5px;top:255.2px;width:59px;text-align:center">Fermer</div>

</body></html>
